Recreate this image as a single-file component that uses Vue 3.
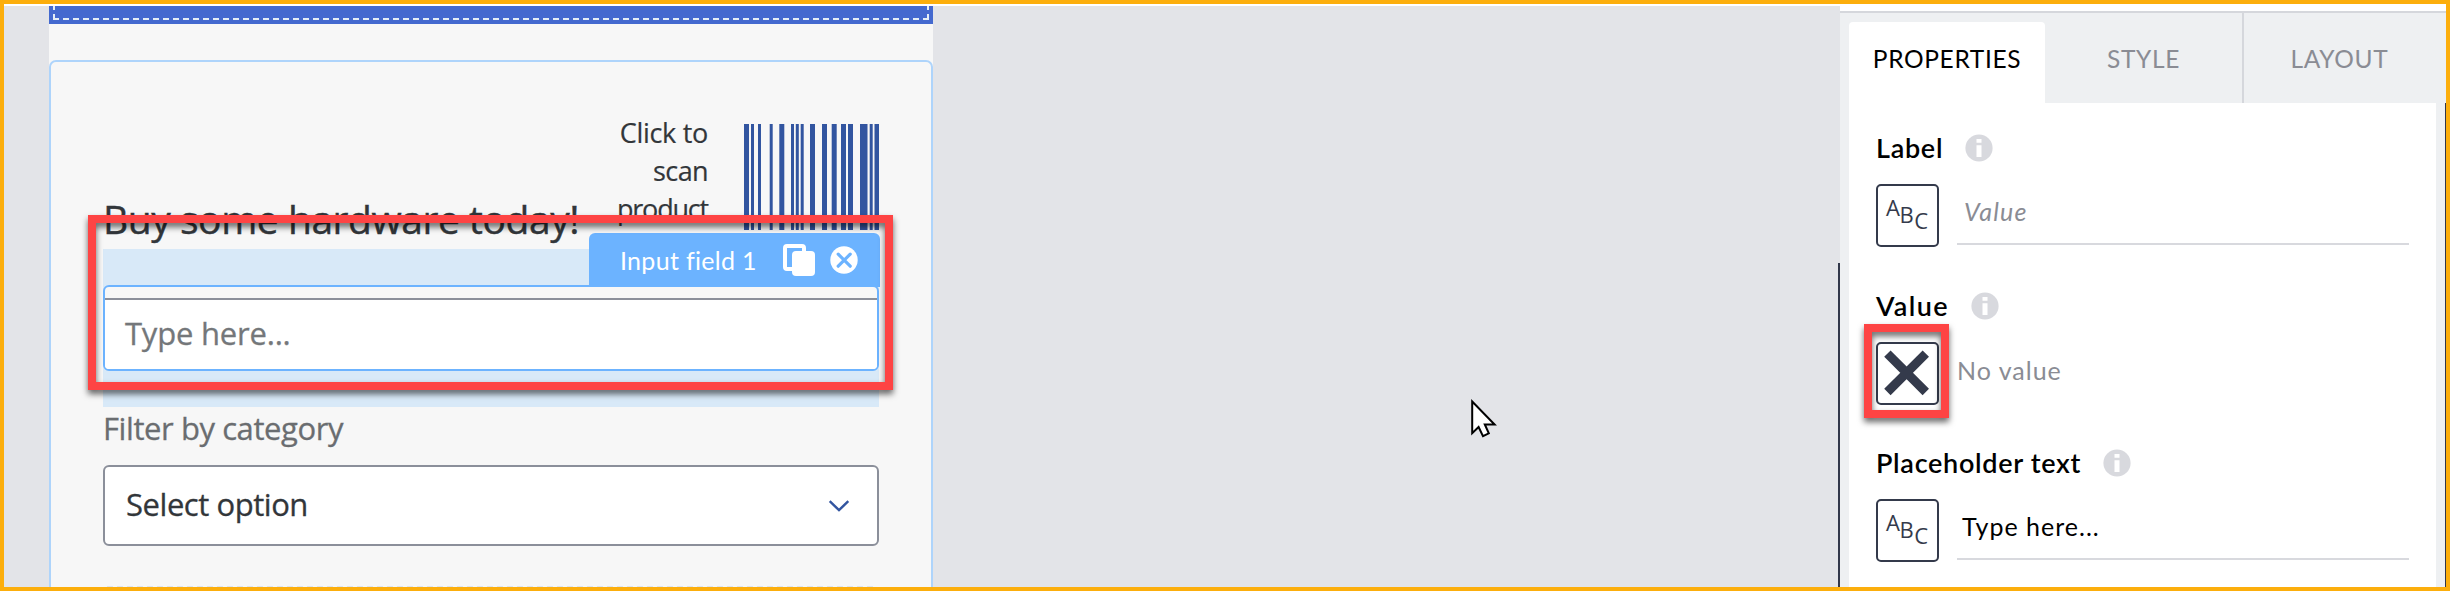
<script setup>
const bars = [
  [0, 5], [7, 3], [14, 3], [25.7, 3], [35.3, 5], [47, 3], [51.8, 3], [56.7, 3],
  [66, 5], [78, 5], [87.7, 5], [97, 5], [104, 5], [116, 7.5], [125.7, 3], [130.5, 4.5],
]

const tabs = [
  { name: 'PROPERTIES', key: 'properties', active: true },
  { name: 'STYLE', key: 'style', active: false },
  { name: 'LAYOUT', key: 'layout', active: false },
]

const fields = [
  { label: 'Label', key: 'label', kind: 'abc', text: 'Value' },
  { label: 'Value', key: 'value', kind: 'none', text: 'No value' },
  { label: 'Placeholder text', key: 'placeholder', kind: 'abc', text: 'Type here...' },
]
</script>

<template>
  <div class="frame">
    <main class="canvas">
      <div class="page">
        <div class="toolbar"><div class="drop-zone"></div></div>
        <section class="card">
          <div class="hero">
            <h1 class="title">Buy some hardware today!</h1>
            <div class="scan">Click to<br /><span class="scan-mid">scan</span><br /><span class="scan-last">product</span></div>
            <svg class="barcode" width="135" height="106" viewBox="0 0 135 106">
              <rect v-for="b in bars" :key="b[0]" :x="b[0]" y="0" :width="b[1]" height="106" fill="#3255a0" />
            </svg>
          </div>

          <div class="selected">
            <div class="outline">
              <div class="input"><span class="input-text">Type here...</span></div>
            </div>
            <div class="tag">
              <span class="tag-text">Input field 1</span>
              <svg class="copy" width="32" height="32" viewBox="0 0 32 32">
                <rect x="2" y="2" width="19" height="23" rx="2" fill="none" stroke="#fff" stroke-width="4" />
                <rect x="9" y="7" width="23" height="25" rx="4" fill="#fff" />
              </svg>
              <svg class="remove" width="28" height="28" viewBox="0 0 28 28">
                <circle cx="14" cy="14" r="13.7" fill="#fff" />
                <path d="M8.2 8.2 20.2 20.2M20.2 8.2 8.2 20.2" stroke="#6cb3ff" stroke-width="3.2" stroke-linecap="round" />
              </svg>
            </div>
          </div>

          <div class="filter-label"><span class="filter-text">Filter by category</span></div>
          <div class="select">
            <span class="select-text">Select option</span>
            <svg width="22" height="14" viewBox="0 0 22 14">
              <path d="M1.7 2.2 11 11.2 20.3 2.2" fill="none" stroke="#3255a0" stroke-width="2.4" />
            </svg>
          </div>
          <div class="next-zone"></div>
        </section>
      </div>
    </main>

    <aside class="panel">
      <nav class="tabs">
        <div v-for="t in tabs" :key="t.key" class="tab" :class="[t.key, { active: t.active }]">
          <span>{{ t.name }}</span>
        </div>
      </nav>
      <div class="props">
        <section v-for="f in fields" :key="f.key" class="prop" :class="f.key">
          <div class="prop-head">
            <span class="prop-name">{{ f.label }}</span>
            <svg class="info" width="28" height="28" viewBox="0 0 28 28">
              <circle cx="14" cy="14" r="13.6" fill="#d8d9de" />
              <path d="M11.5 5h5v3.7h-5zM11.5 11.3h5v11.7h-5z" fill="#fff" />
            </svg>
          </div>
          <div class="prop-row">
            <div class="kind">
              <svg width="59" height="59" viewBox="0 0 59 59">
                <g v-if="f.kind === 'abc'" class="abc">
                  <text x="8" y="30">A</text>
                  <text x="21.5" y="36.5">B</text>
                  <text x="36.3" y="43">C</text>
                </g>
                <path v-else d="M9.4 9.6 47.8 48M47.8 9.6 9.4 48" stroke="#343a4b" stroke-width="9" />
              </svg>
            </div>
            <div class="entry"><span class="entry-text">{{ f.text }}</span></div>
          </div>
        </section>
      </div>
    </aside>
    <div class="scroll-line"></div>
    <div class="edge-line"></div>

    <div class="mark mark-input"></div>
    <div class="mark mark-value"></div>
    <svg class="cursor" width="30" height="42" viewBox="0 0 30 42">
      <path
        d="M2.2 2.5V34.2L8.6 28 13 37.2 18.8 34.3 14.8 25.5H24.6Z"
        fill="#fff" stroke="#000" stroke-width="2"
      />
    </svg>
  </div>
</template>

<style>
body {
  margin: 0;
  overflow: hidden;
}
</style>

<style scoped>
* {
  box-sizing: border-box;
}
.frame {
  position: relative;
  display: flex;
  width: 2450px;
  height: 591px;
  border: 4px solid #fcae0c;
  overflow: hidden;
  background: #fff;
  font-family: "Open Sans", "Noto Sans", sans-serif;
  color: #32363a;
}
span {
  white-space: nowrap;
}
.canvas {
  width: 1836px;
  margin-top: 2px;
  padding-left: 45px;
  background: #e3e4e8;
}
.page {
  width: 884px;
  height: 100%;
  background: #f7f7f7;
  overflow: hidden;
}
.toolbar {
  height: 18px;
  padding: 0 4px 4px;
  background: #4469cf;
}
.drop-zone {
  height: 14px;
  background:
    repeating-linear-gradient(90deg, #e4edf6 0 6px, transparent 6px 10px) 0 100% / 100% 2px no-repeat,
    linear-gradient(#e4edf6 0 4px, transparent 4px 8px, #e4edf6 8px) 0 0 / 2px 14px no-repeat,
    linear-gradient(#e4edf6 0 4px, transparent 4px 8px, #e4edf6 8px) 100% 0 / 2px 14px no-repeat;
}
.card {
  height: 560px;
  margin-top: 36px;
  padding: 0 52px;
  border: 2px solid #aed4fb;
  border-radius: 7px;
}
.hero {
  display: flex;
  height: 187px;
}
.title {
  flex: 1;
  margin: 134px 0 0;
  font-size: 39px;
  line-height: 46px;
  font-weight: 400;
  letter-spacing: -0.45px;
  -webkit-text-stroke: 0.4px #32363a;
  white-space: nowrap;
}
.scan {
  margin: 52px 36px 0 0;
  font-size: 27px;
  line-height: 38px;
  letter-spacing: -0.3px;
  -webkit-text-stroke: 0.2px #32363a;
  text-align: right;
}
.scan-mid {
  letter-spacing: -0.6px;
}
.scan-last {
  letter-spacing: -1.2px;
}
.barcode {
  margin-top: 62px;
}
.selected {
  position: relative;
  height: 158px;
  padding: 36px 0;
  background: #d8e9f8;
}
.outline {
  height: 86px;
  padding-top: 11px;
  border: 2px solid #6cb3ff;
  border-radius: 6px;
  background: #f7f7f7;
  overflow: hidden;
}
.input {
  height: 71px;
  padding-left: 20px;
  border-top: 2px solid #8b8f9a;
  background: #fff;
  color: #74777a;
  font-size: 31px;
  line-height: 66px;
  letter-spacing: -0.2px;
  -webkit-text-stroke: 0.3px #74777a;
}
.tag {
  position: absolute;
  top: -16px;
  right: -1px;
  display: flex;
  width: 291px;
  height: 54px;
  padding: 11px 22px 0 31px;
  border-radius: 6px 6px 0 0;
  background: #6cb3ff;
  color: #fff;
  font: 25px/33px Lato, sans-serif;
  letter-spacing: 0.3px;
}
.copy {
  margin-left: auto;
}
.remove {
  margin: 2px 0 0 15px;
}
.filter-label {
  height: 40px;
  margin-top: 1px;
  color: #6a6d70;
  font-size: 31px;
  line-height: 40px;
  letter-spacing: -0.42px;
  -webkit-text-stroke: 0.3px #6a6d70;
}
.select {
  display: flex;
  justify-content: space-between;
  height: 81px;
  margin-top: 17px;
  padding: 0 27px 0 21px;
  border: 2px solid #8b8f9a;
  border-radius: 6px;
  background: #fff;
  font-size: 31px;
  line-height: 74px;
  letter-spacing: -0.45px;
  -webkit-text-stroke: 0.3px #32363a;
}
.select svg {
  margin-top: 32px;
}
.next-zone {
  height: 2px;
  margin: 40px 4px 0;
  background: repeating-linear-gradient(90deg, #dce5ef 0 6px, transparent 6px 10px);
}
.panel {
  width: 606px;
  margin-top: 7px;
  border-top: 2px solid #d5d7dc;
  padding: 0 10px 0 9px;
  background: #eef0f2;
  font-family: Lato, sans-serif;
}
.tabs {
  display: flex;
  width: 597px;
  height: 90px;
  color: #8a8c94;
  font-size: 24.5px;
  line-height: 30px;
  letter-spacing: 0.65px;
  text-align: center;
}
.tab {
  width: 197px;
  padding-top: 31px;
}
.tab.active {
  width: 196px;
  margin-top: 9px;
  padding-top: 22px;
  border-radius: 4px 4px 0 0;
  background: #fff;
  color: #000;
}
.tab.layout {
  width: 204px;
  padding-right: 11px;
  border-left: 2px solid #d5d7dc;
}
.props {
  height: 600px;
  padding: 30px 27px 0;
  background: #fff;
}
.prop {
  height: 158px;
}
.prop.value {
  height: 157px;
}
.prop-head {
  display: flex;
  align-items: center;
  height: 30px;
  color: #000;
  font-size: 27px;
  font-weight: 600;
  line-height: 30px;
  letter-spacing: 0.7px;
}
.value .prop-head {
  letter-spacing: 1.35px;
}
.prop-row {
  display: flex;
  gap: 18px;
  margin-top: 21px;
}
.kind {
  width: 63px;
  height: 63px;
  border: 2px solid #343a4b;
  border-radius: 5px;
}
.kind svg {
  display: block;
}
.abc {
  fill: #343a4b;
  font: 22px "Open Sans", sans-serif;
}
.entry {
  width: 452px;
  height: 61px;
  padding-left: 7px;
  border-bottom: 2px solid #d8d9de;
  color: #8a8c94;
  font-size: 25px;
  line-height: 55px;
  letter-spacing: 1px;
}
.label .entry {
  font-style: italic;
  letter-spacing: 1.2px;
}
.value .entry {
  padding-left: 0;
  border: 0;
  line-height: 57px;
}
.placeholder .entry {
  padding-left: 5px;
  color: #000;
}
.info {
  margin-left: 22px;
}
.scroll-line {
  position: absolute;
  left: 1834px;
  top: 259px;
  width: 2px;
  height: 324px;
  background: #31374a;
}
.edge-line {
  position: absolute;
  right: 0;
  top: 99px;
  width: 1px;
  height: 484px;
  background: #31374a;
}
.mark {
  position: absolute;
  border: 8px solid #fe4444;
  filter: drop-shadow(0 4px 3px rgba(0, 0, 0, 0.6));
}
.mark-input {
  left: 84px;
  top: 211px;
  width: 805px;
  height: 175px;
}
.mark-value {
  left: 1860px;
  top: 320px;
  width: 85px;
  height: 94px;
}
.cursor {
  position: absolute;
  left: 1466px;
  top: 395px;
}
</style>
